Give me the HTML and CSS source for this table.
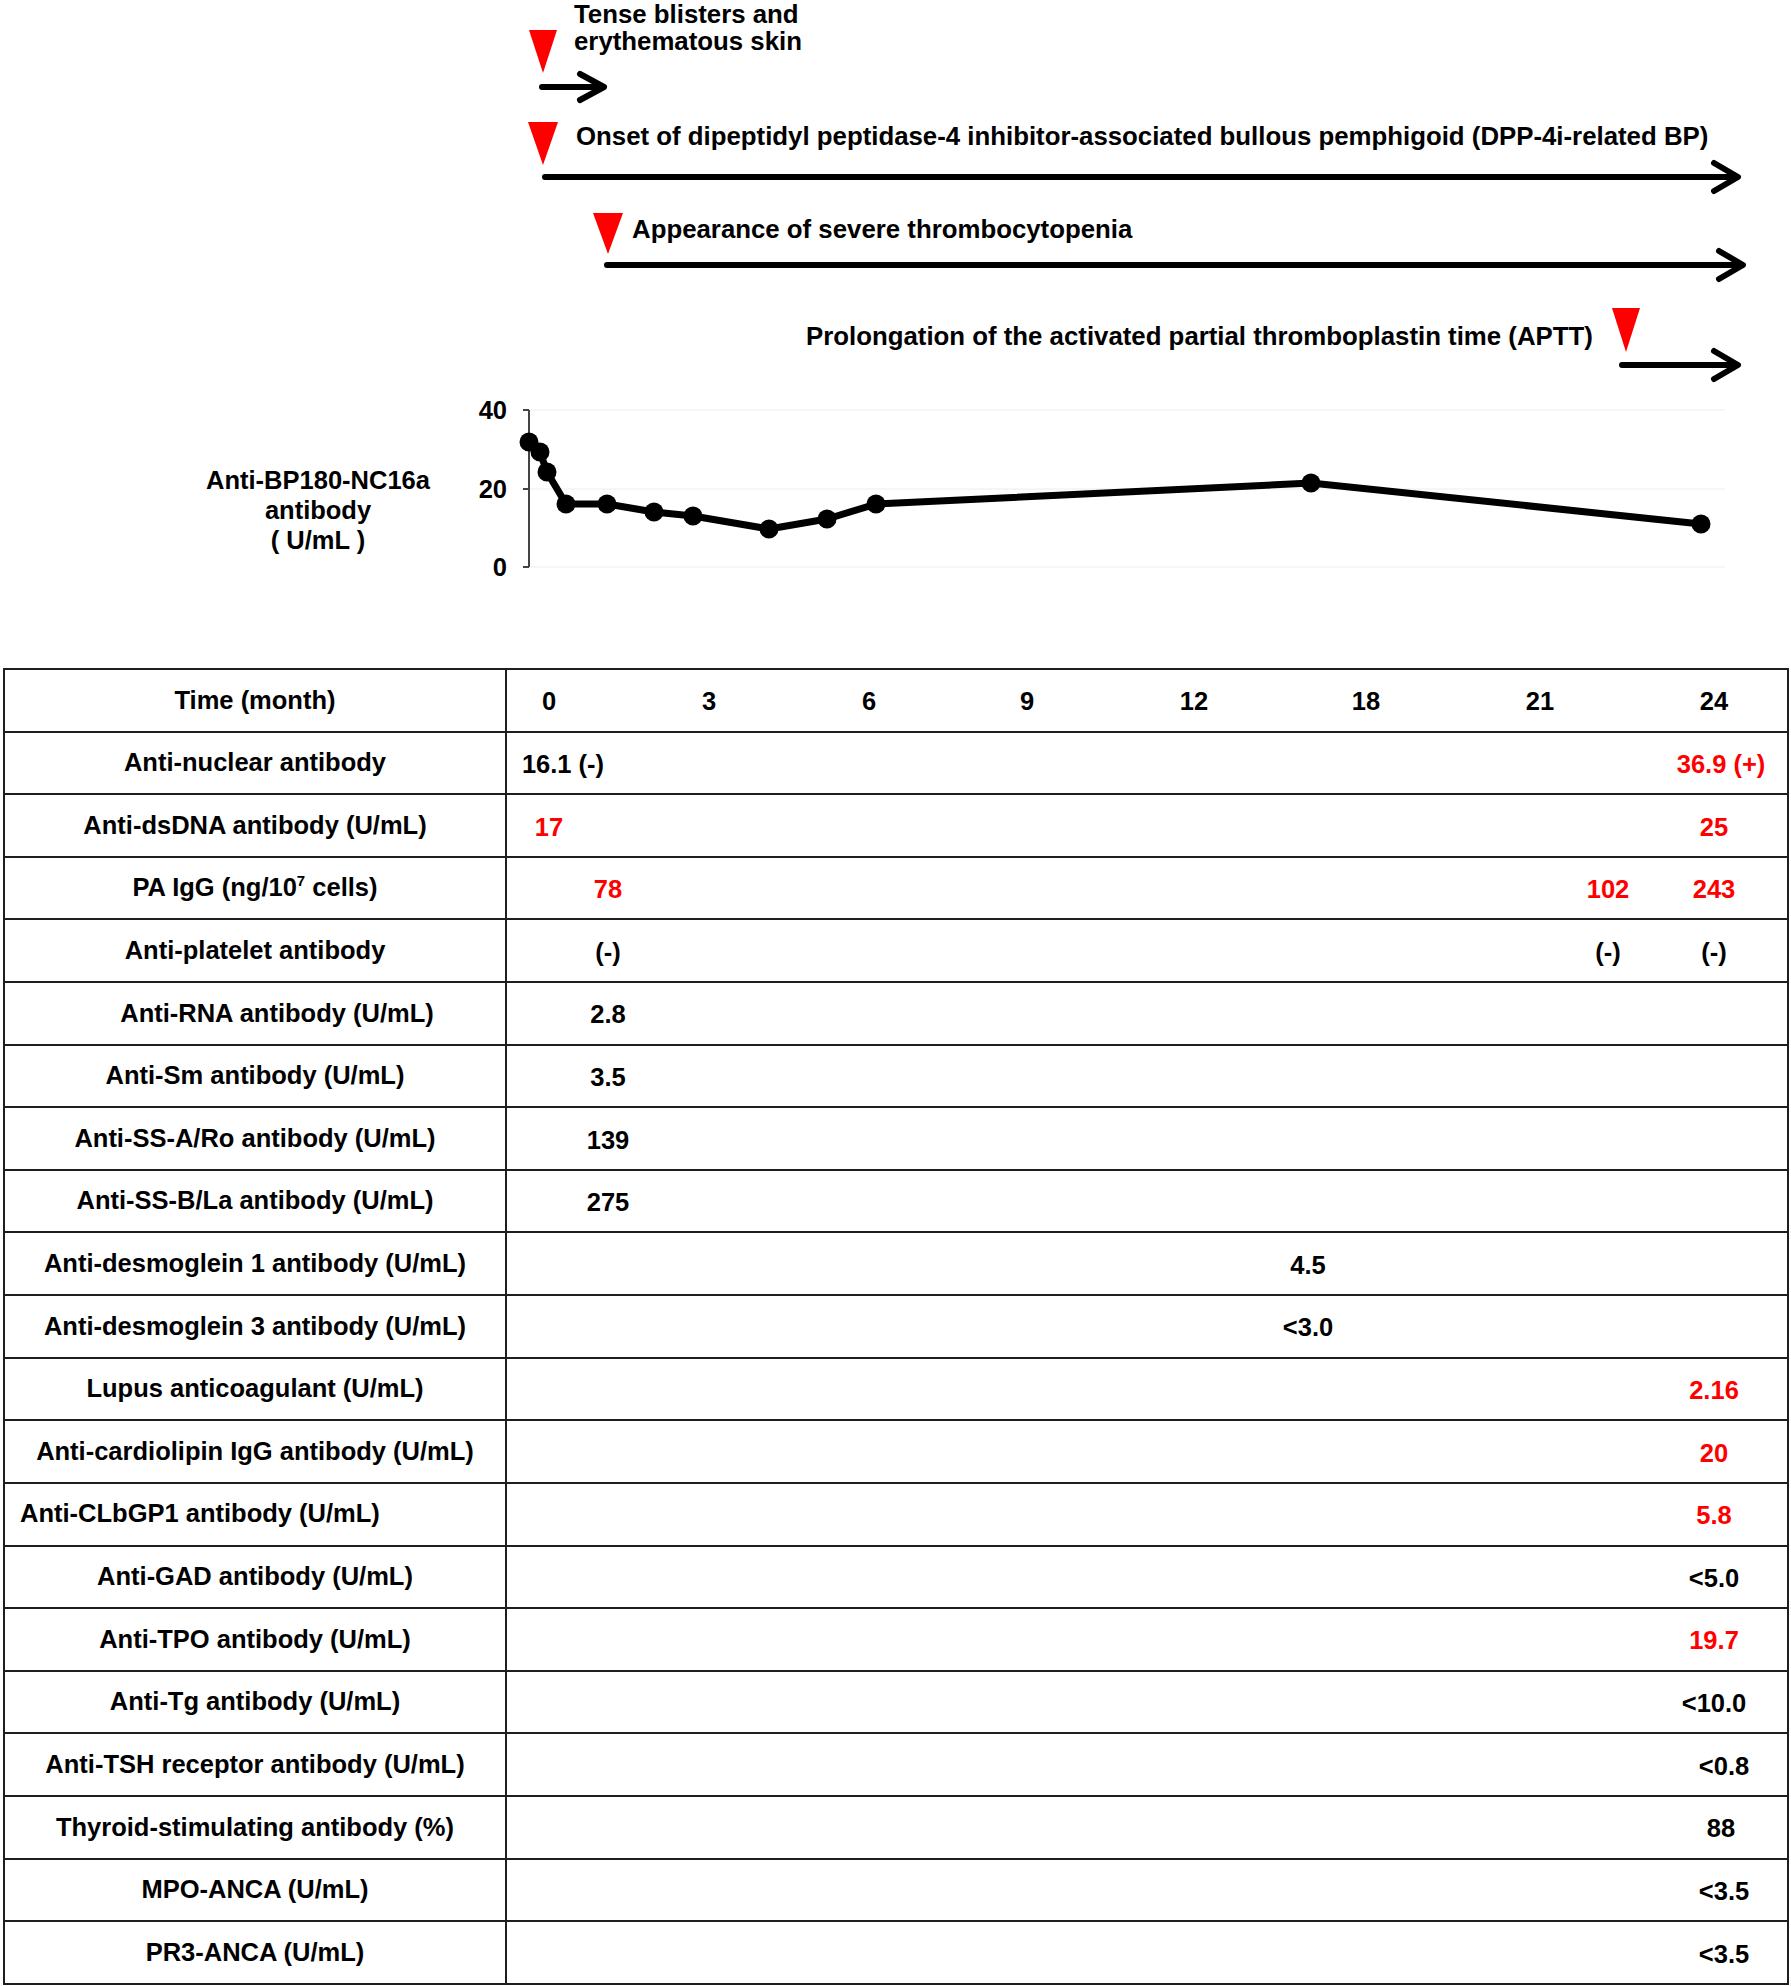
FILE: index.html
```html
<!DOCTYPE html>
<html lang="en">
<head>
<meta charset="utf-8">
<title>Clinical course</title>
<link rel="stylesheet" href="styles.css">
</head>
<body>
<div class="figure">
<svg class="chart" width="1791" height="668" viewBox="0 0 1791 668" xmlns="http://www.w3.org/2000/svg">
  <!-- event 1 -->
  <polygon class="tri" points="529,30 557,30 543,73"/>
  <text class="tl ev" x="574" y="23">Tense blisters and</text>
  <text class="tl ev" x="574" y="50">erythematous skin</text>
  <path class="arr" d="M542 87 H602 M580 74 L604 87 L580 100"/>
  <!-- event 2 -->
  <polygon class="tri" points="528,122 558,122 543,165"/>
  <text class="tl ev" x="576" y="145">Onset of dipeptidyl peptidase-4 inhibitor-associated bullous pemphigoid (DPP-4i-related BP)</text>
  <path class="arr" d="M545 177 H1736 M1714 163 L1738 177 L1714 191"/>
  <!-- event 3 -->
  <polygon class="tri" points="593,213 623,213 608,254"/>
  <text class="tl ev" x="632" y="238">Appearance of severe thrombocytopenia</text>
  <path class="arr" d="M607 265 H1741 M1719 251 L1743 265 L1719 279"/>
  <!-- event 4 -->
  <text class="tl ev" x="806" y="345">Prolongation of the activated partial thromboplastin time (APTT)</text>
  <polygon class="tri" points="1612,308 1640,308 1626,352"/>
  <path class="arr" d="M1622 365 H1736 M1714 351 L1738 365 L1714 379"/>

  <!-- antibody chart -->
  <text class="tl mid" x="318" y="489">Anti-BP180-NC16a</text>
  <text class="tl mid" x="318" y="519">antibody</text>
  <text class="tl mid" x="318" y="549">( U/mL )</text>
  <line class="grid" x1="529" y1="410" x2="1725" y2="410"/>
  <line class="grid" x1="529" y1="489" x2="1725" y2="489"/>
  <line class="grid" x1="529" y1="567" x2="1725" y2="567"/>
  <text class="tl end" x="507" y="419">40</text>
  <text class="tl end" x="507" y="498">20</text>
  <text class="tl end" x="507" y="576">0</text>
  <path class="axis" d="M529 410 V567 M523 410 H529 M523 489 H529 M523 567 H529"/>
  <polyline class="series" points="529,442 540,452 547,472 566,504 607,504 654,512 693,516 769,529 827,519 876,504 1311,483 1701,524"/>
  <g class="dots">
    <circle cx="529" cy="442" r="9.5"/>
    <circle cx="540" cy="452" r="9.5"/>
    <circle cx="547" cy="472" r="9.5"/>
    <circle cx="566" cy="504" r="9.5"/>
    <circle cx="607" cy="504" r="9.5"/>
    <circle cx="654" cy="512" r="9.5"/>
    <circle cx="693" cy="516" r="9.5"/>
    <circle cx="769" cy="529" r="9.5"/>
    <circle cx="827" cy="519" r="9.5"/>
    <circle cx="876" cy="504" r="9.5"/>
    <circle cx="1311" cy="483" r="9.5"/>
    <circle cx="1701" cy="524" r="9.5"/>
  </g>
</svg>
</div>

<table class="labs">
  <tr>
    <td class="name">Time (month)</td>
    <td class="vals"><span class="v m0">0</span><span class="v m3">3</span><span class="v m6">6</span><span class="v m9">9</span><span class="v m12">12</span><span class="v m18">18</span><span class="v m21">21</span><span class="v m24">24</span></td>
  </tr>
  <tr>
    <td class="name">Anti-nuclear antibody</td>
    <td class="vals"><span class="v start">16.1 (-)</span><span class="v m24b red">36.9 (+)</span></td>
  </tr>
  <tr>
    <td class="name">Anti-dsDNA antibody (U/mL)</td>
    <td class="vals"><span class="v m0 red">17</span><span class="v m24 red">25</span></td>
  </tr>
  <tr>
    <td class="name">PA IgG (ng/10<sup>7</sup> cells)</td>
    <td class="vals"><span class="v m1 red">78</span><span class="v m22 red">102</span><span class="v m24 red">243</span></td>
  </tr>
  <tr>
    <td class="name">Anti-platelet antibody</td>
    <td class="vals"><span class="v m1">(-)</span><span class="v m22">(-)</span><span class="v m24">(-)</span></td>
  </tr>
  <tr>
    <td class="name shift">Anti-RNA antibody (U/mL)</td>
    <td class="vals"><span class="v m1">2.8</span></td>
  </tr>
  <tr>
    <td class="name">Anti-Sm antibody (U/mL)</td>
    <td class="vals"><span class="v m1">3.5</span></td>
  </tr>
  <tr>
    <td class="name">Anti-SS-A/Ro antibody (U/mL)</td>
    <td class="vals"><span class="v m1">139</span></td>
  </tr>
  <tr>
    <td class="name">Anti-SS-B/La antibody (U/mL)</td>
    <td class="vals"><span class="v m1">275</span></td>
  </tr>
  <tr>
    <td class="name">Anti-desmoglein 1 antibody (U/mL)</td>
    <td class="vals"><span class="v m16">4.5</span></td>
  </tr>
  <tr>
    <td class="name">Anti-desmoglein 3 antibody (U/mL)</td>
    <td class="vals"><span class="v m16">&lt;3.0</span></td>
  </tr>
  <tr>
    <td class="name">Lupus anticoagulant (U/mL)</td>
    <td class="vals"><span class="v m24 red">2.16</span></td>
  </tr>
  <tr>
    <td class="name">Anti-cardiolipin IgG antibody (U/mL)</td>
    <td class="vals"><span class="v m24 red">20</span></td>
  </tr>
  <tr>
    <td class="name left">Anti-CLbGP1 antibody (U/mL)</td>
    <td class="vals"><span class="v m24 red">5.8</span></td>
  </tr>
  <tr>
    <td class="name">Anti-GAD antibody (U/mL)</td>
    <td class="vals"><span class="v m24">&lt;5.0</span></td>
  </tr>
  <tr>
    <td class="name">Anti-TPO antibody (U/mL)</td>
    <td class="vals"><span class="v m24 red">19.7</span></td>
  </tr>
  <tr>
    <td class="name">Anti-Tg antibody (U/mL)</td>
    <td class="vals"><span class="v m24">&lt;10.0</span></td>
  </tr>
  <tr>
    <td class="name">Anti-TSH receptor antibody (U/mL)</td>
    <td class="vals"><span class="v m24c">&lt;0.8</span></td>
  </tr>
  <tr>
    <td class="name">Thyroid-stimulating antibody (%)</td>
    <td class="vals"><span class="v m24b">88</span></td>
  </tr>
  <tr>
    <td class="name">MPO-ANCA (U/mL)</td>
    <td class="vals"><span class="v m24c">&lt;3.5</span></td>
  </tr>
  <tr>
    <td class="name">PR3-ANCA (U/mL)</td>
    <td class="vals"><span class="v m24c">&lt;3.5</span></td>
  </tr>
</table>
</body>
</html>
```

FILE: styles.css
```css
* {
  box-sizing: border-box;
}

body {
  margin: 0;
  background: #ffffff;
  color: #000000;
  font-family: "Liberation Sans", Arial, sans-serif;
  font-weight: bold;
}

.figure .chart {
  display: block;
}

.tl {
  font-family: "Liberation Sans", Arial, sans-serif;
  font-weight: bold;
  font-size: 25.5px;
  fill: #000000;
}

.tl.ev {
  font-size: 25.8px;
}

.tl.mid {
  text-anchor: middle;
}

.tl.end {
  text-anchor: end;
}

.tri {
  fill: #ff0000;
}

.arr {
  fill: none;
  stroke: #000000;
  stroke-width: 6;
  stroke-linecap: round;
  stroke-linejoin: round;
}

.grid {
  stroke: #f3f3f3;
  stroke-width: 1.5;
}

.axis {
  fill: none;
  stroke: #444444;
  stroke-width: 2;
}

.series {
  fill: none;
  stroke: #000000;
  stroke-width: 7;
  stroke-linejoin: round;
}

.dots circle {
  fill: #000000;
}

.labs {
  border-collapse: collapse;
  table-layout: fixed;
  margin-left: 3px;
  width: 1786px;
  height: 1317px;
}

.labs td {
  border: 2px solid #1e1e1e;
  padding: 0;
  font-size: 25.5px;
  line-height: 1;
}

.labs .name {
  width: 502px;
  text-align: center;
}

.labs .name.shift {
  padding-left: 44px;
}

.labs .name.left {
  text-align: left;
  padding-left: 15px;
}

.labs sup {
  font-size: 15px;
  vertical-align: 10px;
  line-height: 0;
}

.labs .vals {
  position: relative;
}

.v {
  position: absolute;
  top: 50%;
  transform: translate(-50%, -45%);
  white-space: nowrap;
}

.red {
  color: #ff0000;
}

/* positions along the time axis (center of each value) */
.start { left: 56px; }
.m0 { left: 42px; }
.m1 { left: 101px; }
.m3 { left: 202px; }
.m6 { left: 362px; }
.m9 { left: 520px; }
.m12 { left: 687px; }
.m16 { left: 801px; }
.m18 { left: 859px; }
.m21 { left: 1033px; }
.m22 { left: 1101px; }
.m24 { left: 1207px; }
.m24b { left: 1214px; }
.m24c { left: 1217px; }
```
